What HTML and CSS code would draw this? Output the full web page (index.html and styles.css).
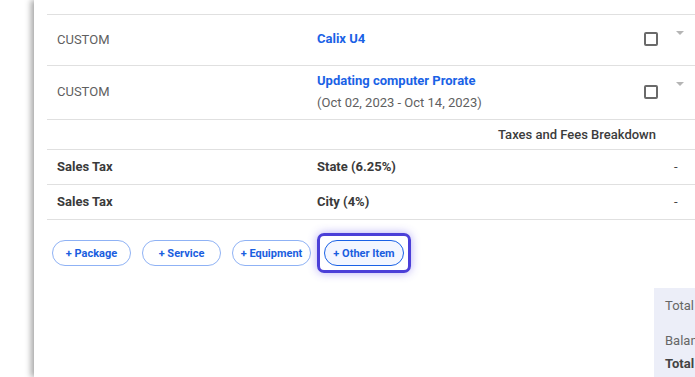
FILE: index.html
```html
<!DOCTYPE html>
<html lang="en">
<head>
  <meta charset="UTF-8" />
  <meta name="viewport" content="width=device-width, initial-scale=1.0"/>
  <title>Order Items</title>
  <link rel="stylesheet" href="styles.css">
</head>
<body>

  <div class="panel">
    <div class="row row-top"></div>

    <div class="row row-item">
      <div class="cell type">CUSTOM</div>
      <div class="cell name"><a href="#" class="item-link">Calix U4</a></div>
      <div class="cell check"><span class="checkbox"></span></div>
      <div class="cell caret-cell"><span class="caret"></span></div>
    </div>

    <div class="row row-item row-tall">
      <div class="cell type">CUSTOM</div>
      <div class="cell name">
        <a href="#" class="item-link">Updating computer Prorate</a>
        <div class="period">(Oct 02, 2023 - Oct 14, 2023)</div>
      </div>
      <div class="cell check"><span class="checkbox"></span></div>
      <div class="cell caret-cell"><span class="caret"></span></div>
    </div>

    <div class="row row-head">
      <div class="breakdown">Taxes and Fees Breakdown</div>
    </div>

    <div class="row row-tax">
      <div class="cell tax-label">Sales Tax</div>
      <div class="cell tax-label">State (6.25%)</div>
      <div class="cell"></div>
      <div class="cell dash">-</div>
    </div>

    <div class="row row-tax">
      <div class="cell tax-label">Sales Tax</div>
      <div class="cell tax-label">City (4%)</div>
      <div class="cell"></div>
      <div class="cell dash">-</div>
    </div>

    <div class="add-buttons">
      <button class="add-btn">+ Package</button>
      <button class="add-btn">+ Service</button>
      <button class="add-btn">+ Equipment</button>
      <span class="focus-ring"><button class="add-btn active">+ Other Item</button></span>
    </div>

    <div class="summary">
      <div class="sum-line first">Total</div>
      <div class="sum-line">Balance</div>
      <div class="sum-line bold">Total</div>
    </div>
  </div>

</body>
</html>
```

FILE: styles.css
```css
html, body {
  margin: 0;
  height: 100%;
  overflow: hidden;
  background-color: #ffffff;
}

body {
  font-family: Roboto, "Liberation Sans", Arial, sans-serif;
  font-size: 13px;
  color: #555;
}

.panel {
  margin-left: 34px;
  height: 100%;
  padding-left: 13px;
  background-color: #ffffff;
  box-shadow: -3px 0 6px rgba(0, 0, 0, 0.35);
  width: 700px;
}

.row {
  display: grid;
  grid-template-columns: 260px 320px 40px 1fr;
  align-items: center;
  border-bottom: 1px solid #e0e0e0;
  box-sizing: border-box;
}

.row-top {
  height: 15px;
}

.row-item {
  height: 51px;
  padding-bottom: 2px;
}

.row-tall {
  height: 54px;
}

.cell {
  padding-left: 10px;
}

.type {
  color: #5f5f5f;
}

.item-link {
  color: #1a62e6;
  font-weight: bold;
  text-decoration: none;
  line-height: 22px;
}

.period {
  line-height: 22px;
  color: #5f5f5f;
}

.check {
  display: flex;
  justify-content: flex-end;
  padding-right: 9px;
}

.checkbox {
  width: 10px;
  height: 10px;
  border: 2px solid #6a6a6a;
  border-radius: 2px;
}

.caret-cell {
  align-self: start;
  padding-left: 9px;
  padding-top: 16px;
}

.caret {
  display: block;
  width: 0;
  height: 0;
  border-left: 4px solid transparent;
  border-right: 4px solid transparent;
  border-top: 4px solid #b5b5b5;
}

.row-head {
  height: 30px;
}

.breakdown {
  grid-column: 1 / 4;
  text-align: right;
  padding-right: 11px;
  font-weight: 500;
  color: #3c3c3c;
}

.row-tax {
  height: 35px;
  padding-bottom: 2px;
}

.tax-label {
  font-weight: bold;
  color: #3a3a3a;
}

.dash {
  padding-left: 7px;
  color: #444;
}

.add-buttons {
  display: flex;
  align-items: center;
  gap: 11px;
  padding: 20px 0 0 5px;
  height: 26px;
}

.add-btn {
  width: 79px;
  height: 26px;
  box-sizing: border-box;
  border: 1px solid #8fb2f5;
  border-radius: 13px;
  background-color: #ffffff;
  color: #1a5ee0;
  font-family: Roboto, "Liberation Sans", Arial, sans-serif;
  font-size: 11px;
  font-weight: bold;
  padding: 0;
}

.add-btn.active {
  width: 80px;
  border-color: #1a62e6;
  background-color: #f3f6ff;
}

.focus-ring {
  display: inline-flex;
  padding: 4px;
  margin: -7px 0 -7px -5px;
  border: 3px solid #4b3fd8;
  border-radius: 7px;
  box-shadow: 0 0 10px rgba(90, 70, 235, 0.45);
}

.summary {
  width: 95px;
  height: 100px;
  margin: 22px 0 0 607px;
  padding-left: 11px;
  box-sizing: border-box;
  background-color: #eceef8;
}

.sum-line {
  color: #666;
  line-height: 23px;
  white-space: nowrap;
}

.sum-line.first {
  padding-top: 6px;
  margin-bottom: 12px;
}

.sum-line.bold {
  font-weight: bold;
  color: #444;
}
```
